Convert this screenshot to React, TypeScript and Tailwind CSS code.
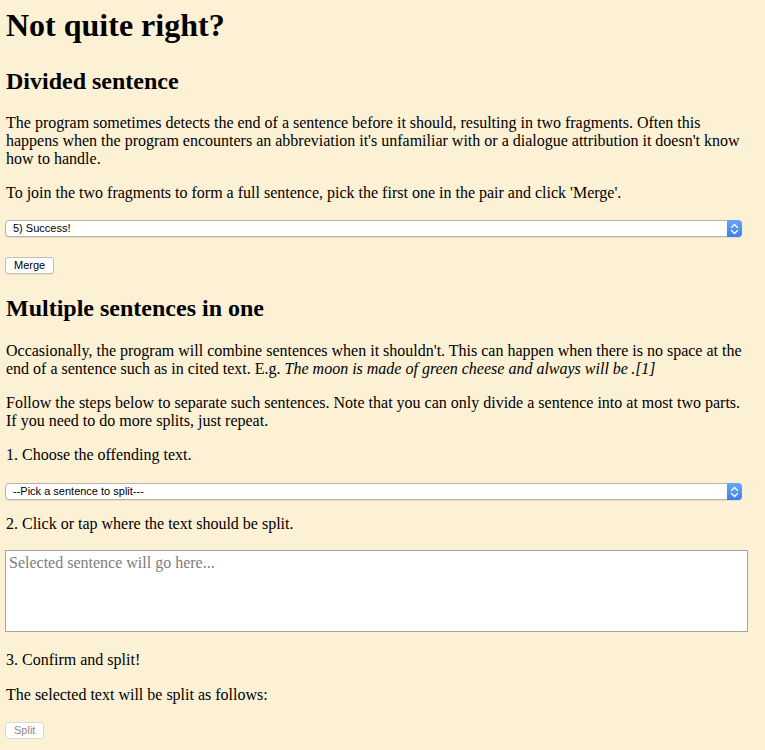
import React from "react";

function Stepper() {
  return (
    <div className="w-[15px] self-stretch -my-px -mr-px rounded-r-[4px] bg-gradient-to-b from-[#6aa6f8] to-[#3a7ef0] flex items-center justify-center">
      <svg width="9" height="12" viewBox="0 0 9 12" fill="none">
        <path d="M1.5 4.5 L4.5 1.5 L7.5 4.5" stroke="white" strokeWidth="1.4" strokeLinecap="round" strokeLinejoin="round" />
        <path d="M1.5 7.5 L4.5 10.5 L7.5 7.5" stroke="white" strokeWidth="1.4" strokeLinecap="round" strokeLinejoin="round" />
      </svg>
    </div>
  );
}

function FakeSelect({ label }: { label: string }) {
  return (
    <div className="w-[737px] h-[17px] flex items-center bg-white border border-[#b9b4aa] rounded-[4px] shadow-[0_1px_0_rgba(0,0,0,0.08)]">
      <div className="flex-1 pl-[7px] text-[11px] leading-[15px] text-black [font-family:'Liberation_Sans',Arial,sans-serif]">
        {label}
      </div>
      <Stepper />
    </div>
  );
}

export default function App() {
  const serif = "[font-family:'Liberation_Serif','Times_New_Roman',serif]";
  return (
    <div className={`min-h-[750px] bg-[#fcf0d5] text-black px-[5px] ${serif}`}>
      <div className="w-[745px]">
        <h1 className="pt-[7px] text-[32px] leading-[37px] font-bold pl-px">Not quite right?</h1>
        <h2 className="mt-[23px] text-[24px] leading-[28px] font-bold pl-px">Divided sentence</h2>
        <p className="mt-[19px] text-[16px] leading-[18px] pl-px">
          The program sometimes detects the end of a sentence before it should, resulting in two fragments. Often this happens when the program encounters an abbreviation it's unfamiliar with or a dialogue attribution it doesn't know how to handle.
        </p>
        <p className="mt-[16px] text-[16px] leading-[18px] pl-px">
          To join the two fragments to form a full sentence, pick the first one in the pair and click 'Merge'.
        </p>
        <div className="mt-[18px]">
          <FakeSelect label="5) Success!" />
        </div>
        <button className="block mt-[20px] h-[17px] px-[8px] bg-white border border-[#c3beb4] rounded-[3px] text-[11px] leading-[15px] text-black [font-family:'Liberation_Sans',Arial,sans-serif] shadow-[0_1px_0_rgba(0,0,0,0.06)]">
          Merge
        </button>
        <h2 className="mt-[20px] text-[24px] leading-[28px] font-bold pl-px">Multiple sentences in one</h2>
        <p className="mt-[20px] text-[16px] leading-[18px] pl-px">
          Occasionally, the program will combine sentences when it shouldn't. This can happen when there is no space at the end of a sentence such as in cited text. E.g.{" "}
          <i>The moon is made of green cheese and always will be{"\u2009"}.[1]</i>
        </p>
        <p className="mt-[16px] text-[16px] leading-[18px] pl-px">
          Follow the steps below to separate such sentences. Note that you can only divide a sentence into at most two parts. If you need to do more splits, just repeat.
        </p>
        <p className="mt-[16px] text-[16px] leading-[18px] pl-px">1. Choose the offending text.</p>
        <div className="mt-[19px]">
          <FakeSelect label="--Pick a sentence to split---" />
        </div>
        <p className="mt-[15px] text-[16px] leading-[18px] pl-px">2. Click or tap where the text should be split.</p>
        <div className="mt-[17px] w-[743px] h-[82px] bg-white border border-[#a8a49c] px-[3px] pt-[3px] text-[16px] leading-[18px] text-[#7d7d7d]">
          Selected sentence will go here...
        </div>
        <p className="mt-[19px] text-[16px] leading-[18px] pl-px">3. Confirm and split!</p>
        <p className="mt-[17px] text-[16px] leading-[18px] pl-px">The selected text will be split as follows:</p>
        <button className="block mt-[18px] h-[17px] px-[8px] bg-white border border-[#dcd8d0] rounded-[3px] text-[11px] leading-[15px] text-[#8a8a8a] [font-family:'Liberation_Sans',Arial,sans-serif]">
          Split
        </button>
      </div>
    </div>
  );
}
